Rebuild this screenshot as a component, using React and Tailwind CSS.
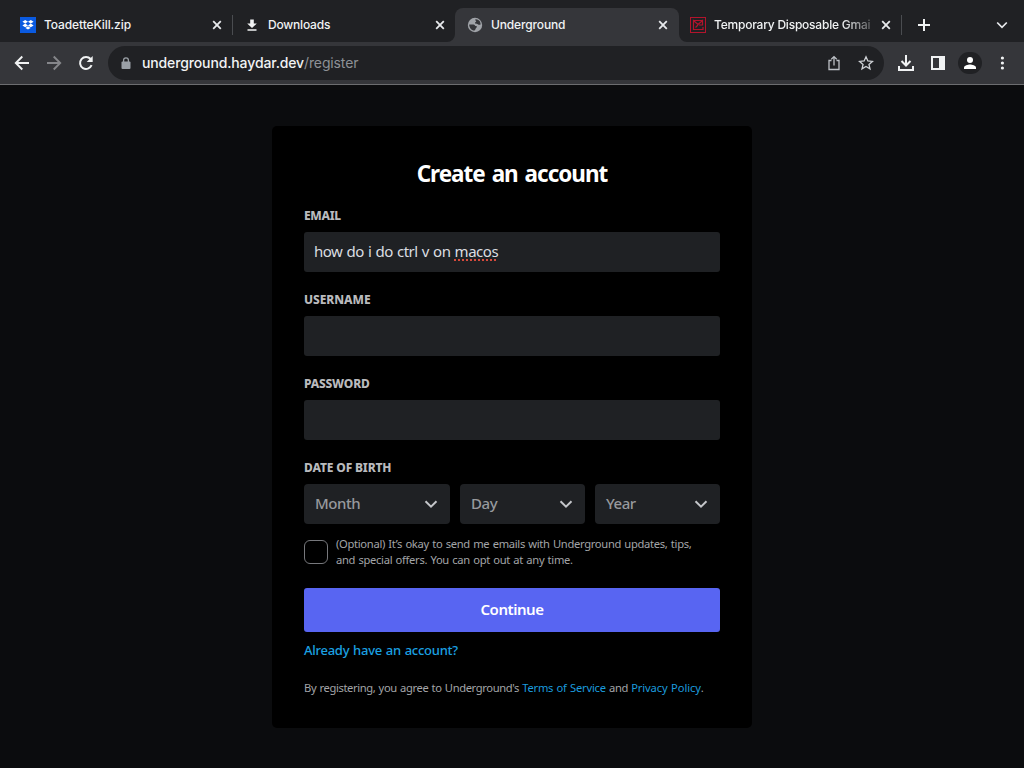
import React from 'react';

const ui = "font-['Inter','Liberation_Sans',sans-serif]";

function Close() {
  return (
    <svg className="block h-[10px] w-[10px] shrink-0" viewBox="0 0 10 10" stroke="#e8eaed" strokeWidth="1.8" fill="none">
      <path d="M1.2 1.2 8.8 8.8M8.8 1.2 1.2 8.8" />
    </svg>
  );
}

function Tab({ icon, title, width, spacing, active, fade, divider }) {
  return (
    <div className={`flex h-[34px] shrink-0 items-center ${width} ${active ? 'relative rounded-t-lg bg-[#35363a]' : ''}`}>
      {active && (
        <>
          <svg className="absolute bottom-0 -left-2 h-2 w-2" viewBox="0 0 8 8"><path d="M8 0v8H0a8 8 0 0 0 8-8z" fill="#35363a" /></svg>
          <svg className="absolute -right-2 bottom-0 h-2 w-2" viewBox="0 0 8 8"><path d="M0 0v8h8a8 8 0 0 1-8-8z" fill="#35363a" /></svg>
        </>
      )}
      <div className="ml-3 flex h-4 w-4 shrink-0 items-center justify-center">{icon}</div>
      <div className={`ml-2 min-w-0 flex-1 text-[12px] leading-4 font-medium whitespace-nowrap text-[#f1f3f4] ${spacing} ${fade ? '[mask-image:linear-gradient(to_right,black_82%,#0004)]' : ''}`}>
        {title}
      </div>
      <div className={`ml-[10px] ${active ? 'mr-[11px]' : 'mr-[10px]'}`}><Close /></div>
      {divider && <div className="h-5 w-px bg-[#4a4c50]" />}
    </div>
  );
}

function DropboxIcon() {
  return (
    <svg className="h-4 w-4" viewBox="0 0 16 16">
      <rect width="16" height="16" fill="#0a5ae0" />
      <path d="M5.2 3 8 4.8 5.2 6.6 2.4 4.8zM10.8 3l2.8 1.8-2.8 1.8L8 4.8zM5.2 6.6 8 8.4l-2.8 1.8-2.8-1.8zM10.8 6.6l2.8 1.8-2.8 1.8L8 8.4zM8 9.2l2.6 1.7L8 12.6l-2.6-1.7z" fill="#fff" />
    </svg>
  );
}

function DownloadTabIcon() {
  return (
    <svg className="h-4 w-4" viewBox="0 0 16 16" fill="#f1f3f4">
      <path d="M6.2 2.500h3.600v4h3L8 11 3.200 6.500h3zM3.500 12.200h9v1.600h-9z" />
    </svg>
  );
}

function GlobeIcon() {
  return (
    <svg className="h-4 w-4" viewBox="0 0 16 16">
      <circle cx="8" cy="8" r="7.2" fill="#a0a3a8" />
      <path d="M2.2 7.6 6.4 7.4c1.4.2 1.5 1.5 2.7 1.7 1.1.2 1 1.2.2 1.7-.8.6-.6 1.8-1.8 2.8-3 .1-5.3-2.8-5.3-6zM8.3 2.3c2.2-.2 3.8 1 4.7 2.3l.7 2.6c-.9.9-2 .7-2.9.1-.6-.6-1.7-.3-2.5-.8-.6-.6-.2-1.4.5-1.5.6-.2.4-.7-.1-1.1z" fill="#35363a" />
    </svg>
  );
}

function MailIcon() {
  return (
    <svg className="h-4 w-4" viewBox="0 0 16 16" fill="none" stroke="#b3142c">
      <rect x=".5" y=".5" width="15" height="15" />
      <path d="M3 3.500h10M3.500 13V3.500L8 7.500l4.500-4V8H9M3 12.500h10V10M5.500 10.500 8 8" strokeWidth="1.200" />
    </svg>
  );
}

function Toolbar() {
  return (
    <div className="flex h-[43px] items-center border-b border-[#6c6d70] bg-[#35363a]">
      <div className="ml-[14px] flex items-center gap-4">
        <svg className="h-4 w-4" viewBox="0 0 16 16" fill="none" stroke="#f1f3f4" strokeWidth="1.9"><path d="M15 8H2M8.300 1.500 1.800 8l6.500 6.500" /></svg>
        <svg className="h-4 w-4" viewBox="0 0 16 16" fill="none" stroke="#85868a" strokeWidth="1.900"><path d="M1 8h13M7.700 1.500 14.200 8l-6.500 6.500" /></svg>
        <svg className="h-4 w-4" viewBox="0 0 16 16"><path d="M13.600 10.200A6 6 0 1 1 12.600 4" fill="none" stroke="#f1f3f4" strokeWidth="2" /><path d="M14.700 1v6H8.700z" fill="#f1f3f4" /></svg>
      </div>
      <div className="ml-[14px] flex h-[34px] w-[776px] items-center rounded-full bg-[#202124]">
        <svg className="ml-[13px] h-[12px] w-[10px]" viewBox="0 0 10 12"><path d="M2.600 5V3.200a2.400 2.400 0 0 1 4.800 0V5" fill="none" stroke="#9aa0a6" strokeWidth="1.300" /><rect x=".5" y="4.500" width="9" height="7.500" rx="1" fill="#9aa0a6" /></svg>
        <div className="ml-[11px] flex-1 text-[14px] leading-5 font-medium tracking-[-0.13px] whitespace-nowrap text-[#f1f3f4]">
          <span>underground.haydar.dev</span><span className="font-normal text-[#8e9196]">/register</span>
        </div>
        <svg className="h-4 w-4" viewBox="0 0 16 16" fill="none" stroke="#bdc1c6" strokeWidth="1.300"><path d="M5.500 5.500H3v9h10v-9h-2.500M8 10.500V1.800M5.300 4.300 8 1.600l2.700 2.700" /></svg>
        <svg className="mr-[10px] ml-4 h-4 w-4" viewBox="0 0 16 16" fill="none" stroke="#d0d3d7" strokeWidth="1.300"><path d="m8 1.800 1.850 4.200 4.550.4-3.450 3 1.050 4.500L8 11.500l-4 2.400 1.050-4.500-3.450-3 4.550-.4z" /></svg>
      </div>
      <div className="ml-[13px] flex items-center">
        <svg className="h-[18px] w-[18px]" viewBox="0 0 18 18" fill="none" stroke="#f1f3f4" strokeWidth="2"><path d="M9 1v10M4.500 7 9 11.500 13.500 7M2 12v4h14v-4" /></svg>
        <svg className="ml-[15px] h-4 w-4" viewBox="0 0 16 16" fill="#f1f3f4"><path fillRule="evenodd" d="M1 1h14v14H1zM3 3v10h6V3z" /></svg>
        <div className="ml-[12px] flex h-[22px] w-6 items-center justify-center rounded-full bg-[#202124]">
          <svg className="h-3 w-3" viewBox="0 0 12 12" fill="#fff"><circle cx="6" cy="3" r="3" /><path d="M0 12v-1.500C0 8.500 4 7.500 6 7.500s6 1 6 3V12z" /></svg>
        </div>
        <svg className="ml-[12px] h-4 w-4" viewBox="0 0 16 16" fill="#f1f3f4"><circle cx="8.400" cy="3" r="1.600" /><circle cx="8.400" cy="8" r="1.600" /><circle cx="8.400" cy="13" r="1.600" /></svg>
      </div>
    </div>
  );
}

function Label({ children, spacing }) {
  return <div className={`h-4 text-[12px] leading-4 font-extrabold text-[#b9babd] uppercase ${spacing}`}>{children}</div>;
}

function Field({ label, spacing, children }) {
  return (
    <div className="mb-5">
      <Label spacing={spacing}>{label}</Label>
      <div className="mt-2 flex h-10 items-center rounded-[3px] bg-[#1f2124] px-[10px] pb-[2px] text-[15px] tracking-[-0.48px] text-[#dbdee1] [word-spacing:0.7px]">{children}</div>
    </div>
  );
}

function Select({ label, width }) {
  return (
    <div className={`flex h-10 items-center justify-between rounded bg-[#1f2124] pr-[12px] pl-[11px] ${width}`}>
      <span className="pb-[2px] text-[15px] font-medium tracking-[-0.45px] text-[#97999d]">{label}</span>
      <svg className="h-[14px] w-[14px]" viewBox="0 0 14 14" fill="none" stroke="#c4c6ca" strokeWidth="2"><path d="m1.500 4.300 5.500 5.300 5.500-5.300" /></svg>
    </div>
  );
}

export default function App() {
  return (
    <div className="flex h-[768px] w-[1024px] flex-col overflow-hidden bg-[#0b0c0e]">
      <div className={ui}>
        <div className="flex h-[42px] items-end bg-[#202124] pl-2">
          <Tab width="w-[225px]" icon={<DropboxIcon />} title="ToadetteKill.zip" spacing="tracking-[-0.1px]" divider />
          <Tab width="-ml-px w-[223px]" icon={<DownloadTabIcon />} title="Downloads" spacing="tracking-[-0.2px]" />
          <Tab width="w-[224px]" icon={<GlobeIcon />} title="Underground" spacing="tracking-[-0.15px]" active />
          <Tab width="-ml-px w-[224px]" icon={<MailIcon />} title="Temporary Disposable Gmai" spacing="tracking-[-0.22px]" fade divider />
          <div className="flex h-[34px] flex-1 items-center justify-between pr-4 pl-[16px]">
            <svg className="h-3 w-3" viewBox="0 0 12 12" stroke="#f1f3f4" strokeWidth="2"><path d="M6 0v12M0 6h12" /></svg>
            <svg className="h-3 w-3" viewBox="0 0 12 12" stroke="#e8eaed" strokeWidth="1.700" fill="none"><path d="m1.200 3.500 4.800 4.800 4.800-4.800" /></svg>
          </div>
        </div>
        <Toolbar />
      </div>
      <main className="flex flex-1 justify-center pt-[41px] font-['Noto_Sans','Open_Sans',sans-serif]">
        <div className="h-[602px] w-[480px] rounded-[5px] bg-black px-8 pt-[33px]">
          <h1 className="text-center text-[22.5px] leading-[30px] font-bold tracking-[-1px] whitespace-nowrap text-white [word-spacing:2px]">Create an account</h1>
          <div className="mt-[19px]">
            <Field label="Email" spacing="tracking-[-0.3px]">
              <span className="whitespace-nowrap">how do i do ctrl v on <span className="underline decoration-[#d64a3c] decoration-dotted decoration-2 underline-offset-[3px]">macos</span></span>
            </Field>
            <Field label="Username" spacing="tracking-[-0.05px]" />
            <Field label="Password" spacing="tracking-[-0.2px]" />
          </div>
          <Label spacing="tracking-[-0.15px]">Date of birth</Label>
          <div className="mt-2 flex gap-[10px]">
            <Select label="Month" width="w-[146px]" />
            <Select label="Day" width="w-[125px]" />
            <Select label="Year" width="w-[125px]" />
          </div>
          <div className="mt-3 flex items-center gap-2">
            <div className="h-6 w-6 shrink-0 rounded-md border border-[#77787c]" />
            <div className="text-[11.2px] leading-4 tracking-[-0.31px] whitespace-nowrap text-[#a3a5a8] [word-spacing:0.7px]">
              <div>(Optional) It’s okay to send me emails with Underground updates, tips,</div>
              <div>and special offers. You can opt out at any time.</div>
            </div>
          </div>
          <button className="mt-5 block h-11 w-full rounded-[3px] bg-[#5865f2] pb-[2px] text-[15px] font-semibold tracking-[-0.45px] text-white">Continue</button>
          <div className="mt-[9px] h-[18px] text-[13px] leading-[18px] font-medium tracking-[-0.26px] text-[#1ba1e2] [word-spacing:0.7px]">Already have an account?</div>
          <div className="mt-[21px] text-[11.2px] leading-4 tracking-[-0.38px] whitespace-nowrap text-[#a3a5a8] [word-spacing:0.7px]">
            By registering, you agree to Underground's <span className="tracking-[-0.24px] text-[#1b9bdd]">Terms of Service</span> and <span className="tracking-[-0.12px] text-[#1b9bdd]">Privacy Policy</span>.
          </div>
        </div>
      </main>
    </div>
  );
}
